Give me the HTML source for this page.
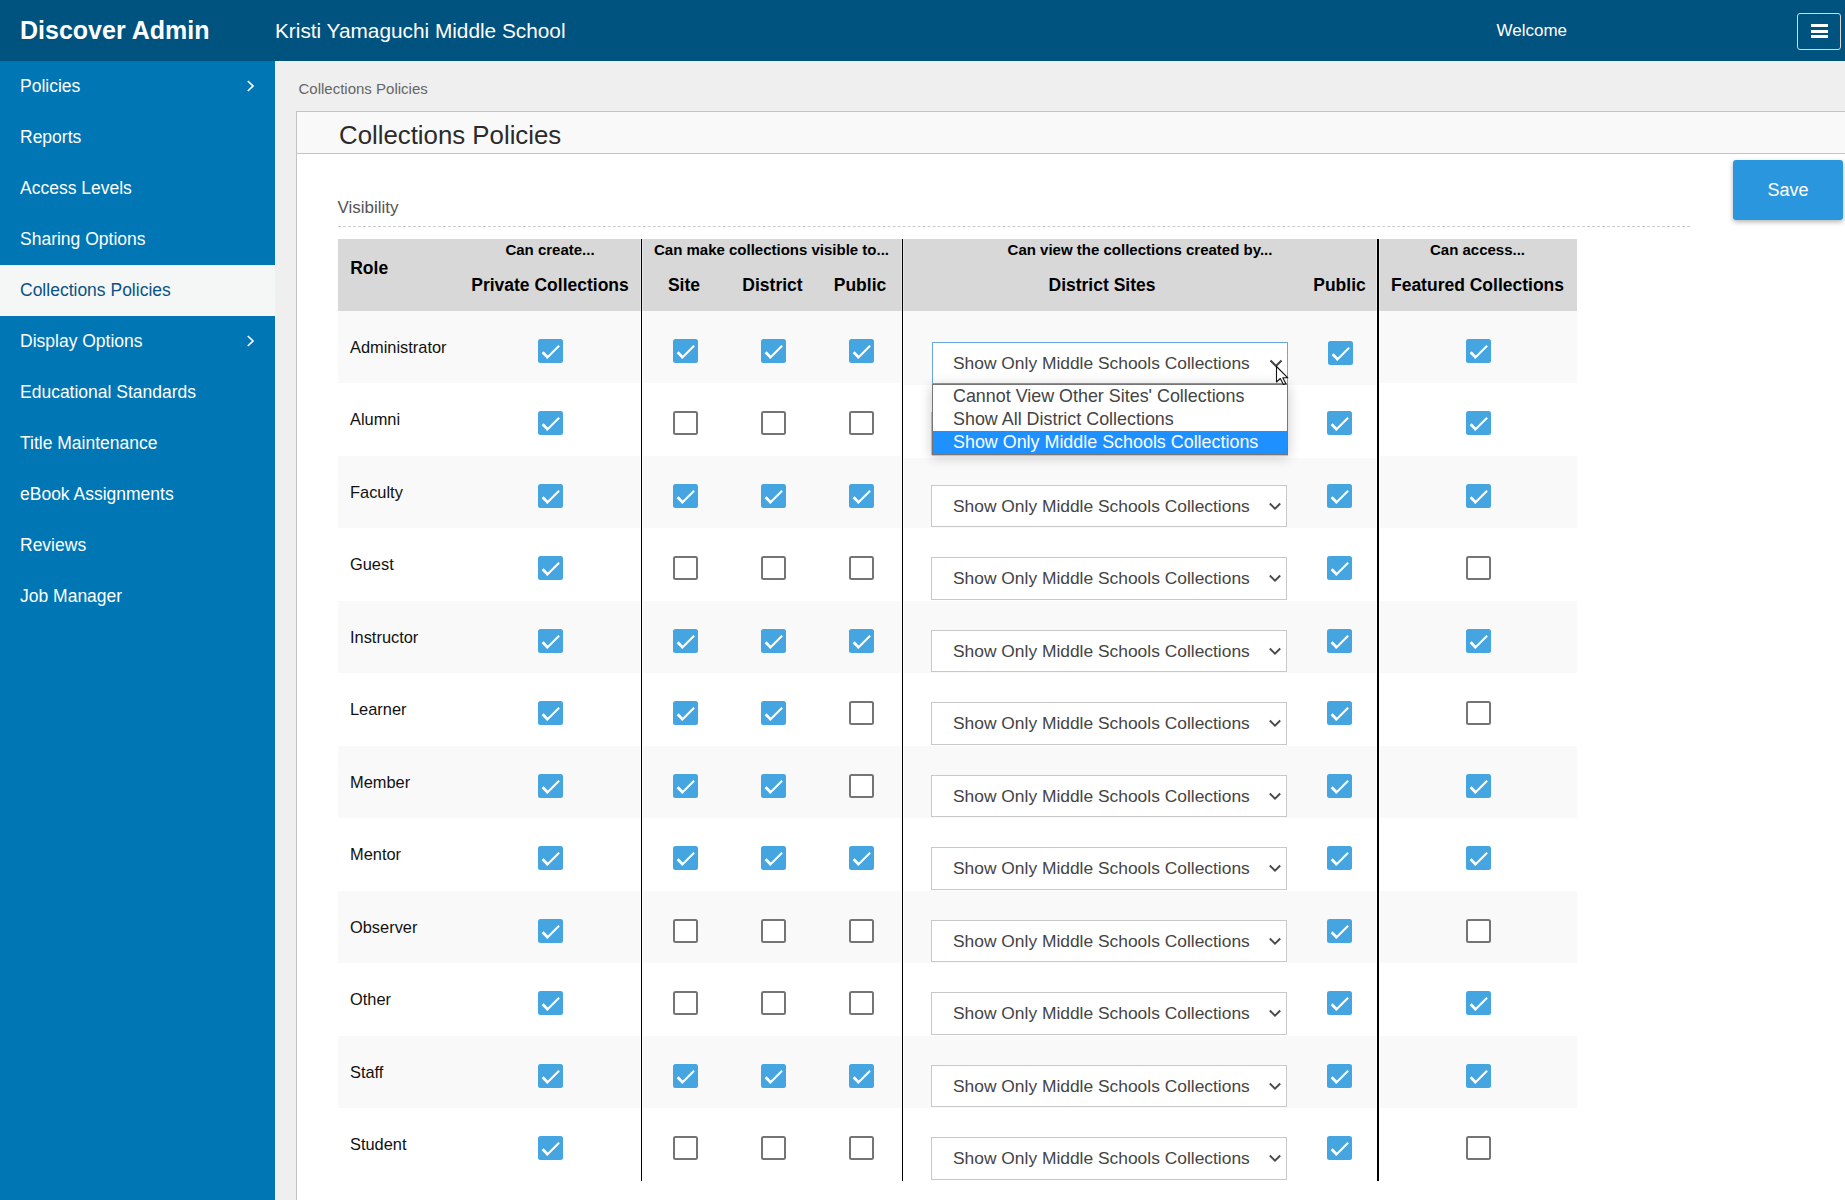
<!DOCTYPE html>
<html><head><meta charset="utf-8"><style>
*{box-sizing:border-box}
html,body{margin:0;padding:0}
body{width:1845px;height:1200px;overflow:hidden;position:relative;background:#efefef;font-family:"Liberation Sans",sans-serif}
.abs{position:absolute}
#hdr{position:absolute;left:0;top:0;width:1845px;height:61px;background:#00527f}
#brand{position:absolute;left:20px;top:17.8px;font-size:25px;line-height:25px;font-weight:700;color:#fff;white-space:nowrap}
#school{position:absolute;left:275px;top:21.2px;font-size:20.8px;line-height:20.8px;color:#fff;white-space:nowrap}
#welcome{position:absolute;left:1496.5px;top:22.3px;font-size:17px;line-height:17px;color:#fff;white-space:nowrap}
#burger{position:absolute;left:1797px;top:13px;width:44px;height:37px;border:1px solid #d9d9d9;border-radius:3px}
#side{position:absolute;left:0;top:61px;width:275px;height:1139px;background:#0076b4}
.si{position:absolute;left:0;width:275px;height:51px;line-height:51px;padding-left:20px;font-size:17.5px;color:#fff;white-space:nowrap}
.si.active{background:#f5f7f7;color:#0a5286}
.chev{position:absolute;left:245px;top:18.3px}
#crumb{position:absolute;left:298.5px;top:80.9px;font-size:15px;line-height:15px;color:#666;white-space:nowrap}
#panel{position:absolute;left:296px;top:111px;width:1549px;height:1089px;background:#fff;border-left:1px solid #c3c3c3;border-top:1px solid #c3c3c3}
#phead{position:absolute;left:297px;top:112px;width:1548px;height:42px;background:#f9f9f9;border-bottom:1px solid #c3c3c3}
#ptitle{position:absolute;left:339px;top:122.6px;font-size:25.8px;line-height:25.8px;color:#2b2b2b;white-space:nowrap}
#save{position:absolute;left:1733px;top:160px;width:110px;height:60px;background:#2a96dd;border-radius:3px;box-shadow:0 2px 5px rgba(0,0,0,.3);color:#fff;font-size:18px;line-height:60px;text-align:center}
#vis{position:absolute;left:337.5px;top:199.3px;font-size:17px;line-height:17px;color:#555;white-space:nowrap}
#dash{position:absolute;left:338px;top:226px;width:1352px;height:1px;border-top:1px dashed #cccccc}
#thead{position:absolute;left:338px;top:239px;width:1239px;height:72px;background:#d8d8d8}
.th{position:absolute;font-weight:700;color:#000;white-space:nowrap}
.g{font-size:15px;line-height:15px;top:241.6px;text-align:center}
.c{font-size:17.5px;line-height:17.5px;top:277.2px;text-align:center}
.vline{position:absolute;top:239px;width:3px;height:942px;background:#fff;border-left:1px solid #fff;border-right:1px solid #fff}
.vline:after{content:"";position:absolute;left:0;top:0;width:1px;height:100%;background:#000}
.vline .hd{position:absolute;left:-1px;top:0;width:3px;height:72px;background:#e6e6e6}
.vline.v2{width:4px}
.vline.v2:after{width:2px}
.vline.v2 .hd{width:4px}
.rowbg{position:absolute;left:338px;width:1239px;background:#f9f9f9}
.rname{position:absolute;left:350px;font-size:16.4px;line-height:16.4px;color:#111;white-space:nowrap}
.cb{position:absolute;width:25px;height:24px;border-radius:2.5px}
.cb.on{background:#45a5e1}
.cb.on svg{position:absolute;left:0;top:0}
.cb.off{background:#fff;border:2px solid #747474}
.sel{position:absolute;left:931px;width:356px;height:42px;background:#fff;border:1px solid #c8c8c8}
.sel span{position:absolute;left:21px;top:12px;font-size:17.4px;line-height:17.5px;color:#444;white-space:nowrap}
.sel .arr{position:absolute;left:336px;top:15.8px}
#osel{position:absolute;left:932px;top:342px;width:356px;height:42px;background:#fff;border:1px solid #6aa7e0}
#osel span{position:absolute;left:20px;top:12px;font-size:17.4px;line-height:17.5px;color:#444;white-space:nowrap}
#popup{position:absolute;left:932px;top:384px;width:356px;height:71px;background:#fff;border:1px solid #767676;box-shadow:0 1px 0 #c4c4c4,0 2px 12px rgba(0,0,0,.22)}
.opt{position:absolute;left:0;width:354px;height:23px;padding-left:20px;font-size:17.9px;line-height:23px;color:#444;white-space:nowrap}
.opt.hi{background:#1e90ff;color:#fff}
</style></head><body>
<div id="hdr"></div>
<div id="brand">Discover Admin</div>
<div id="school">Kristi Yamaguchi Middle School</div>
<div id="welcome">Welcome</div>
<div id="burger"><svg width="44" height="37" viewBox="0 0 44 37" style="position:absolute;left:-1px;top:-1px"><rect x="14" y="11" width="17" height="3" fill="#fff"/><rect x="14" y="17" width="17" height="3" fill="#fff"/><rect x="14" y="22" width="17" height="3" fill="#fff"/></svg></div>
<div id="side"></div>
<div class="si" style="top:61px">Policies<svg class="chev" width="10" height="14" viewBox="0 0 10 14"><path d="M2.8 2 L8 7 L2.8 12" fill="none" stroke="#fff" stroke-width="1.7"/></svg></div><div class="si" style="top:112px">Reports</div><div class="si" style="top:163px">Access Levels</div><div class="si" style="top:214px">Sharing Options</div><div class="si active" style="top:265px">Collections Policies</div><div class="si" style="top:316px">Display Options<svg class="chev" width="10" height="14" viewBox="0 0 10 14"><path d="M2.8 2 L8 7 L2.8 12" fill="none" stroke="#fff" stroke-width="1.7"/></svg></div><div class="si" style="top:367px">Educational Standards</div><div class="si" style="top:418px">Title Maintenance</div><div class="si" style="top:469px">eBook Assignments</div><div class="si" style="top:520px">Reviews</div><div class="si" style="top:571px">Job Manager</div>
<div id="crumb">Collections Policies</div>
<div id="panel"></div>
<div id="phead"></div>
<div id="ptitle">Collections Policies</div>
<div id="save">Save</div>
<div id="vis">Visibility</div>
<div id="dash"></div>
<div id="thead"></div>
<div class="th" style="left:350.2px;top:260.2px;font-size:17.5px;line-height:17.5px">Role</div>
<div class="th g" style="left:459px;width:182px">Can create...</div>
<div class="th g" style="left:641px;width:261px">Can make collections visible to...</div>
<div class="th g" style="left:902px;width:476px">Can view the collections created by...</div>
<div class="th g" style="left:1378px;width:199px">Can access...</div>
<div class="th c" style="left:459px;width:182px">Private Collections</div>
<div class="th c" style="left:641px;width:86px">Site</div>
<div class="th c" style="left:727px;width:91px">District</div>
<div class="th c" style="left:818px;width:84px">Public</div>
<div class="th c" style="left:902px;width:400px">District Sites</div>
<div class="th c" style="left:1301px;width:77px">Public</div>
<div class="th c" style="left:1378px;width:199px">Featured Collections</div>
<div class="rowbg" style="top:311px;height:72px;width:564px"></div><div class="rowbg" style="left:902px;top:311px;height:74px;width:476px"></div><div class="rowbg" style="left:1378px;top:311px;height:72px;width:199px"></div><div class="rname" style="top:339px">Administrator</div><div class="cb on" style="left:538px;top:339px"><svg width="25" height="25" viewBox="0 0 25 25"><path d="M4.6 13.3 L9.8 18.5" fill="none" stroke="#fff" stroke-width="2.7"/><path d="M8.6 19.3 L21.1 6.8" fill="none" stroke="#fff" stroke-width="2.1"/></svg></div><div class="cb on" style="left:673px;top:339px"><svg width="25" height="25" viewBox="0 0 25 25"><path d="M4.6 13.3 L9.8 18.5" fill="none" stroke="#fff" stroke-width="2.7"/><path d="M8.6 19.3 L21.1 6.8" fill="none" stroke="#fff" stroke-width="2.1"/></svg></div><div class="cb on" style="left:761px;top:339px"><svg width="25" height="25" viewBox="0 0 25 25"><path d="M4.6 13.3 L9.8 18.5" fill="none" stroke="#fff" stroke-width="2.7"/><path d="M8.6 19.3 L21.1 6.8" fill="none" stroke="#fff" stroke-width="2.1"/></svg></div><div class="cb on" style="left:849px;top:339px"><svg width="25" height="25" viewBox="0 0 25 25"><path d="M4.6 13.3 L9.8 18.5" fill="none" stroke="#fff" stroke-width="2.7"/><path d="M8.6 19.3 L21.1 6.8" fill="none" stroke="#fff" stroke-width="2.1"/></svg></div><div class="cb on" style="left:1328px;top:341px"><svg width="25" height="25" viewBox="0 0 25 25"><path d="M4.6 13.3 L9.8 18.5" fill="none" stroke="#fff" stroke-width="2.7"/><path d="M8.6 19.3 L21.1 6.8" fill="none" stroke="#fff" stroke-width="2.1"/></svg></div><div class="cb on" style="left:1466px;top:339px"><svg width="25" height="25" viewBox="0 0 25 25"><path d="M4.6 13.3 L9.8 18.5" fill="none" stroke="#fff" stroke-width="2.7"/><path d="M8.6 19.3 L21.1 6.8" fill="none" stroke="#fff" stroke-width="2.1"/></svg></div><div class="rname" style="top:411px">Alumni</div><div class="cb on" style="left:538px;top:411px"><svg width="25" height="25" viewBox="0 0 25 25"><path d="M4.6 13.3 L9.8 18.5" fill="none" stroke="#fff" stroke-width="2.7"/><path d="M8.6 19.3 L21.1 6.8" fill="none" stroke="#fff" stroke-width="2.1"/></svg></div><div class="cb off" style="left:673px;top:411px"></div><div class="cb off" style="left:761px;top:411px"></div><div class="cb off" style="left:849px;top:411px"></div><div class="cb on" style="left:1327px;top:411px"><svg width="25" height="25" viewBox="0 0 25 25"><path d="M4.6 13.3 L9.8 18.5" fill="none" stroke="#fff" stroke-width="2.7"/><path d="M8.6 19.3 L21.1 6.8" fill="none" stroke="#fff" stroke-width="2.1"/></svg></div><div class="cb on" style="left:1466px;top:411px"><svg width="25" height="25" viewBox="0 0 25 25"><path d="M4.6 13.3 L9.8 18.5" fill="none" stroke="#fff" stroke-width="2.7"/><path d="M8.6 19.3 L21.1 6.8" fill="none" stroke="#fff" stroke-width="2.1"/></svg></div><div class="sel" style="top:412px;height:43px"><span>Show Only Middle Schools Collections</span><svg class="arr" width="14" height="9" viewBox="0 0 14 9"><path d="M1.8 1.5 L7 6.7 L12.2 1.5" fill="none" stroke="#4a4a4a" stroke-width="1.9"/></svg></div><div class="rowbg" style="top:456px;height:72px;width:564px"></div><div class="rowbg" style="left:902px;top:458px;height:70px;width:476px"></div><div class="rowbg" style="left:1378px;top:456px;height:72px;width:199px"></div><div class="rname" style="top:484px">Faculty</div><div class="cb on" style="left:538px;top:484px"><svg width="25" height="25" viewBox="0 0 25 25"><path d="M4.6 13.3 L9.8 18.5" fill="none" stroke="#fff" stroke-width="2.7"/><path d="M8.6 19.3 L21.1 6.8" fill="none" stroke="#fff" stroke-width="2.1"/></svg></div><div class="cb on" style="left:673px;top:484px"><svg width="25" height="25" viewBox="0 0 25 25"><path d="M4.6 13.3 L9.8 18.5" fill="none" stroke="#fff" stroke-width="2.7"/><path d="M8.6 19.3 L21.1 6.8" fill="none" stroke="#fff" stroke-width="2.1"/></svg></div><div class="cb on" style="left:761px;top:484px"><svg width="25" height="25" viewBox="0 0 25 25"><path d="M4.6 13.3 L9.8 18.5" fill="none" stroke="#fff" stroke-width="2.7"/><path d="M8.6 19.3 L21.1 6.8" fill="none" stroke="#fff" stroke-width="2.1"/></svg></div><div class="cb on" style="left:849px;top:484px"><svg width="25" height="25" viewBox="0 0 25 25"><path d="M4.6 13.3 L9.8 18.5" fill="none" stroke="#fff" stroke-width="2.7"/><path d="M8.6 19.3 L21.1 6.8" fill="none" stroke="#fff" stroke-width="2.1"/></svg></div><div class="cb on" style="left:1327px;top:484px"><svg width="25" height="25" viewBox="0 0 25 25"><path d="M4.6 13.3 L9.8 18.5" fill="none" stroke="#fff" stroke-width="2.7"/><path d="M8.6 19.3 L21.1 6.8" fill="none" stroke="#fff" stroke-width="2.1"/></svg></div><div class="cb on" style="left:1466px;top:484px"><svg width="25" height="25" viewBox="0 0 25 25"><path d="M4.6 13.3 L9.8 18.5" fill="none" stroke="#fff" stroke-width="2.7"/><path d="M8.6 19.3 L21.1 6.8" fill="none" stroke="#fff" stroke-width="2.1"/></svg></div><div class="sel" style="top:485px;height:42px"><span>Show Only Middle Schools Collections</span><svg class="arr" width="14" height="9" viewBox="0 0 14 9"><path d="M1.8 1.5 L7 6.7 L12.2 1.5" fill="none" stroke="#4a4a4a" stroke-width="1.9"/></svg></div><div class="rname" style="top:556px">Guest</div><div class="cb on" style="left:538px;top:556px"><svg width="25" height="25" viewBox="0 0 25 25"><path d="M4.6 13.3 L9.8 18.5" fill="none" stroke="#fff" stroke-width="2.7"/><path d="M8.6 19.3 L21.1 6.8" fill="none" stroke="#fff" stroke-width="2.1"/></svg></div><div class="cb off" style="left:673px;top:556px"></div><div class="cb off" style="left:761px;top:556px"></div><div class="cb off" style="left:849px;top:556px"></div><div class="cb on" style="left:1327px;top:556px"><svg width="25" height="25" viewBox="0 0 25 25"><path d="M4.6 13.3 L9.8 18.5" fill="none" stroke="#fff" stroke-width="2.7"/><path d="M8.6 19.3 L21.1 6.8" fill="none" stroke="#fff" stroke-width="2.1"/></svg></div><div class="cb off" style="left:1466px;top:556px"></div><div class="sel" style="top:557px;height:43px"><span>Show Only Middle Schools Collections</span><svg class="arr" width="14" height="9" viewBox="0 0 14 9"><path d="M1.8 1.5 L7 6.7 L12.2 1.5" fill="none" stroke="#4a4a4a" stroke-width="1.9"/></svg></div><div class="rowbg" style="top:601px;height:72px"></div><div class="rname" style="top:629px">Instructor</div><div class="cb on" style="left:538px;top:629px"><svg width="25" height="25" viewBox="0 0 25 25"><path d="M4.6 13.3 L9.8 18.5" fill="none" stroke="#fff" stroke-width="2.7"/><path d="M8.6 19.3 L21.1 6.8" fill="none" stroke="#fff" stroke-width="2.1"/></svg></div><div class="cb on" style="left:673px;top:629px"><svg width="25" height="25" viewBox="0 0 25 25"><path d="M4.6 13.3 L9.8 18.5" fill="none" stroke="#fff" stroke-width="2.7"/><path d="M8.6 19.3 L21.1 6.8" fill="none" stroke="#fff" stroke-width="2.1"/></svg></div><div class="cb on" style="left:761px;top:629px"><svg width="25" height="25" viewBox="0 0 25 25"><path d="M4.6 13.3 L9.8 18.5" fill="none" stroke="#fff" stroke-width="2.7"/><path d="M8.6 19.3 L21.1 6.8" fill="none" stroke="#fff" stroke-width="2.1"/></svg></div><div class="cb on" style="left:849px;top:629px"><svg width="25" height="25" viewBox="0 0 25 25"><path d="M4.6 13.3 L9.8 18.5" fill="none" stroke="#fff" stroke-width="2.7"/><path d="M8.6 19.3 L21.1 6.8" fill="none" stroke="#fff" stroke-width="2.1"/></svg></div><div class="cb on" style="left:1327px;top:629px"><svg width="25" height="25" viewBox="0 0 25 25"><path d="M4.6 13.3 L9.8 18.5" fill="none" stroke="#fff" stroke-width="2.7"/><path d="M8.6 19.3 L21.1 6.8" fill="none" stroke="#fff" stroke-width="2.1"/></svg></div><div class="cb on" style="left:1466px;top:629px"><svg width="25" height="25" viewBox="0 0 25 25"><path d="M4.6 13.3 L9.8 18.5" fill="none" stroke="#fff" stroke-width="2.7"/><path d="M8.6 19.3 L21.1 6.8" fill="none" stroke="#fff" stroke-width="2.1"/></svg></div><div class="sel" style="top:630px;height:42px"><span>Show Only Middle Schools Collections</span><svg class="arr" width="14" height="9" viewBox="0 0 14 9"><path d="M1.8 1.5 L7 6.7 L12.2 1.5" fill="none" stroke="#4a4a4a" stroke-width="1.9"/></svg></div><div class="rname" style="top:701px">Learner</div><div class="cb on" style="left:538px;top:701px"><svg width="25" height="25" viewBox="0 0 25 25"><path d="M4.6 13.3 L9.8 18.5" fill="none" stroke="#fff" stroke-width="2.7"/><path d="M8.6 19.3 L21.1 6.8" fill="none" stroke="#fff" stroke-width="2.1"/></svg></div><div class="cb on" style="left:673px;top:701px"><svg width="25" height="25" viewBox="0 0 25 25"><path d="M4.6 13.3 L9.8 18.5" fill="none" stroke="#fff" stroke-width="2.7"/><path d="M8.6 19.3 L21.1 6.8" fill="none" stroke="#fff" stroke-width="2.1"/></svg></div><div class="cb on" style="left:761px;top:701px"><svg width="25" height="25" viewBox="0 0 25 25"><path d="M4.6 13.3 L9.8 18.5" fill="none" stroke="#fff" stroke-width="2.7"/><path d="M8.6 19.3 L21.1 6.8" fill="none" stroke="#fff" stroke-width="2.1"/></svg></div><div class="cb off" style="left:849px;top:701px"></div><div class="cb on" style="left:1327px;top:701px"><svg width="25" height="25" viewBox="0 0 25 25"><path d="M4.6 13.3 L9.8 18.5" fill="none" stroke="#fff" stroke-width="2.7"/><path d="M8.6 19.3 L21.1 6.8" fill="none" stroke="#fff" stroke-width="2.1"/></svg></div><div class="cb off" style="left:1466px;top:701px"></div><div class="sel" style="top:702px;height:43px"><span>Show Only Middle Schools Collections</span><svg class="arr" width="14" height="9" viewBox="0 0 14 9"><path d="M1.8 1.5 L7 6.7 L12.2 1.5" fill="none" stroke="#4a4a4a" stroke-width="1.9"/></svg></div><div class="rowbg" style="top:746px;height:72px"></div><div class="rname" style="top:774px">Member</div><div class="cb on" style="left:538px;top:774px"><svg width="25" height="25" viewBox="0 0 25 25"><path d="M4.6 13.3 L9.8 18.5" fill="none" stroke="#fff" stroke-width="2.7"/><path d="M8.6 19.3 L21.1 6.8" fill="none" stroke="#fff" stroke-width="2.1"/></svg></div><div class="cb on" style="left:673px;top:774px"><svg width="25" height="25" viewBox="0 0 25 25"><path d="M4.6 13.3 L9.8 18.5" fill="none" stroke="#fff" stroke-width="2.7"/><path d="M8.6 19.3 L21.1 6.8" fill="none" stroke="#fff" stroke-width="2.1"/></svg></div><div class="cb on" style="left:761px;top:774px"><svg width="25" height="25" viewBox="0 0 25 25"><path d="M4.6 13.3 L9.8 18.5" fill="none" stroke="#fff" stroke-width="2.7"/><path d="M8.6 19.3 L21.1 6.8" fill="none" stroke="#fff" stroke-width="2.1"/></svg></div><div class="cb off" style="left:849px;top:774px"></div><div class="cb on" style="left:1327px;top:774px"><svg width="25" height="25" viewBox="0 0 25 25"><path d="M4.6 13.3 L9.8 18.5" fill="none" stroke="#fff" stroke-width="2.7"/><path d="M8.6 19.3 L21.1 6.8" fill="none" stroke="#fff" stroke-width="2.1"/></svg></div><div class="cb on" style="left:1466px;top:774px"><svg width="25" height="25" viewBox="0 0 25 25"><path d="M4.6 13.3 L9.8 18.5" fill="none" stroke="#fff" stroke-width="2.7"/><path d="M8.6 19.3 L21.1 6.8" fill="none" stroke="#fff" stroke-width="2.1"/></svg></div><div class="sel" style="top:775px;height:42px"><span>Show Only Middle Schools Collections</span><svg class="arr" width="14" height="9" viewBox="0 0 14 9"><path d="M1.8 1.5 L7 6.7 L12.2 1.5" fill="none" stroke="#4a4a4a" stroke-width="1.9"/></svg></div><div class="rname" style="top:846px">Mentor</div><div class="cb on" style="left:538px;top:846px"><svg width="25" height="25" viewBox="0 0 25 25"><path d="M4.6 13.3 L9.8 18.5" fill="none" stroke="#fff" stroke-width="2.7"/><path d="M8.6 19.3 L21.1 6.8" fill="none" stroke="#fff" stroke-width="2.1"/></svg></div><div class="cb on" style="left:673px;top:846px"><svg width="25" height="25" viewBox="0 0 25 25"><path d="M4.6 13.3 L9.8 18.5" fill="none" stroke="#fff" stroke-width="2.7"/><path d="M8.6 19.3 L21.1 6.8" fill="none" stroke="#fff" stroke-width="2.1"/></svg></div><div class="cb on" style="left:761px;top:846px"><svg width="25" height="25" viewBox="0 0 25 25"><path d="M4.6 13.3 L9.8 18.5" fill="none" stroke="#fff" stroke-width="2.7"/><path d="M8.6 19.3 L21.1 6.8" fill="none" stroke="#fff" stroke-width="2.1"/></svg></div><div class="cb on" style="left:849px;top:846px"><svg width="25" height="25" viewBox="0 0 25 25"><path d="M4.6 13.3 L9.8 18.5" fill="none" stroke="#fff" stroke-width="2.7"/><path d="M8.6 19.3 L21.1 6.8" fill="none" stroke="#fff" stroke-width="2.1"/></svg></div><div class="cb on" style="left:1327px;top:846px"><svg width="25" height="25" viewBox="0 0 25 25"><path d="M4.6 13.3 L9.8 18.5" fill="none" stroke="#fff" stroke-width="2.7"/><path d="M8.6 19.3 L21.1 6.8" fill="none" stroke="#fff" stroke-width="2.1"/></svg></div><div class="cb on" style="left:1466px;top:846px"><svg width="25" height="25" viewBox="0 0 25 25"><path d="M4.6 13.3 L9.8 18.5" fill="none" stroke="#fff" stroke-width="2.7"/><path d="M8.6 19.3 L21.1 6.8" fill="none" stroke="#fff" stroke-width="2.1"/></svg></div><div class="sel" style="top:847px;height:43px"><span>Show Only Middle Schools Collections</span><svg class="arr" width="14" height="9" viewBox="0 0 14 9"><path d="M1.8 1.5 L7 6.7 L12.2 1.5" fill="none" stroke="#4a4a4a" stroke-width="1.9"/></svg></div><div class="rowbg" style="top:891px;height:72px"></div><div class="rname" style="top:919px">Observer</div><div class="cb on" style="left:538px;top:919px"><svg width="25" height="25" viewBox="0 0 25 25"><path d="M4.6 13.3 L9.8 18.5" fill="none" stroke="#fff" stroke-width="2.7"/><path d="M8.6 19.3 L21.1 6.8" fill="none" stroke="#fff" stroke-width="2.1"/></svg></div><div class="cb off" style="left:673px;top:919px"></div><div class="cb off" style="left:761px;top:919px"></div><div class="cb off" style="left:849px;top:919px"></div><div class="cb on" style="left:1327px;top:919px"><svg width="25" height="25" viewBox="0 0 25 25"><path d="M4.6 13.3 L9.8 18.5" fill="none" stroke="#fff" stroke-width="2.7"/><path d="M8.6 19.3 L21.1 6.8" fill="none" stroke="#fff" stroke-width="2.1"/></svg></div><div class="cb off" style="left:1466px;top:919px"></div><div class="sel" style="top:920px;height:42px"><span>Show Only Middle Schools Collections</span><svg class="arr" width="14" height="9" viewBox="0 0 14 9"><path d="M1.8 1.5 L7 6.7 L12.2 1.5" fill="none" stroke="#4a4a4a" stroke-width="1.9"/></svg></div><div class="rname" style="top:991px">Other</div><div class="cb on" style="left:538px;top:991px"><svg width="25" height="25" viewBox="0 0 25 25"><path d="M4.6 13.3 L9.8 18.5" fill="none" stroke="#fff" stroke-width="2.7"/><path d="M8.6 19.3 L21.1 6.8" fill="none" stroke="#fff" stroke-width="2.1"/></svg></div><div class="cb off" style="left:673px;top:991px"></div><div class="cb off" style="left:761px;top:991px"></div><div class="cb off" style="left:849px;top:991px"></div><div class="cb on" style="left:1327px;top:991px"><svg width="25" height="25" viewBox="0 0 25 25"><path d="M4.6 13.3 L9.8 18.5" fill="none" stroke="#fff" stroke-width="2.7"/><path d="M8.6 19.3 L21.1 6.8" fill="none" stroke="#fff" stroke-width="2.1"/></svg></div><div class="cb on" style="left:1466px;top:991px"><svg width="25" height="25" viewBox="0 0 25 25"><path d="M4.6 13.3 L9.8 18.5" fill="none" stroke="#fff" stroke-width="2.7"/><path d="M8.6 19.3 L21.1 6.8" fill="none" stroke="#fff" stroke-width="2.1"/></svg></div><div class="sel" style="top:992px;height:43px"><span>Show Only Middle Schools Collections</span><svg class="arr" width="14" height="9" viewBox="0 0 14 9"><path d="M1.8 1.5 L7 6.7 L12.2 1.5" fill="none" stroke="#4a4a4a" stroke-width="1.9"/></svg></div><div class="rowbg" style="top:1036px;height:72px"></div><div class="rname" style="top:1064px">Staff</div><div class="cb on" style="left:538px;top:1064px"><svg width="25" height="25" viewBox="0 0 25 25"><path d="M4.6 13.3 L9.8 18.5" fill="none" stroke="#fff" stroke-width="2.7"/><path d="M8.6 19.3 L21.1 6.8" fill="none" stroke="#fff" stroke-width="2.1"/></svg></div><div class="cb on" style="left:673px;top:1064px"><svg width="25" height="25" viewBox="0 0 25 25"><path d="M4.6 13.3 L9.8 18.5" fill="none" stroke="#fff" stroke-width="2.7"/><path d="M8.6 19.3 L21.1 6.8" fill="none" stroke="#fff" stroke-width="2.1"/></svg></div><div class="cb on" style="left:761px;top:1064px"><svg width="25" height="25" viewBox="0 0 25 25"><path d="M4.6 13.3 L9.8 18.5" fill="none" stroke="#fff" stroke-width="2.7"/><path d="M8.6 19.3 L21.1 6.8" fill="none" stroke="#fff" stroke-width="2.1"/></svg></div><div class="cb on" style="left:849px;top:1064px"><svg width="25" height="25" viewBox="0 0 25 25"><path d="M4.6 13.3 L9.8 18.5" fill="none" stroke="#fff" stroke-width="2.7"/><path d="M8.6 19.3 L21.1 6.8" fill="none" stroke="#fff" stroke-width="2.1"/></svg></div><div class="cb on" style="left:1327px;top:1064px"><svg width="25" height="25" viewBox="0 0 25 25"><path d="M4.6 13.3 L9.8 18.5" fill="none" stroke="#fff" stroke-width="2.7"/><path d="M8.6 19.3 L21.1 6.8" fill="none" stroke="#fff" stroke-width="2.1"/></svg></div><div class="cb on" style="left:1466px;top:1064px"><svg width="25" height="25" viewBox="0 0 25 25"><path d="M4.6 13.3 L9.8 18.5" fill="none" stroke="#fff" stroke-width="2.7"/><path d="M8.6 19.3 L21.1 6.8" fill="none" stroke="#fff" stroke-width="2.1"/></svg></div><div class="sel" style="top:1065px;height:42px"><span>Show Only Middle Schools Collections</span><svg class="arr" width="14" height="9" viewBox="0 0 14 9"><path d="M1.8 1.5 L7 6.7 L12.2 1.5" fill="none" stroke="#4a4a4a" stroke-width="1.9"/></svg></div><div class="rname" style="top:1136px">Student</div><div class="cb on" style="left:538px;top:1136px"><svg width="25" height="25" viewBox="0 0 25 25"><path d="M4.6 13.3 L9.8 18.5" fill="none" stroke="#fff" stroke-width="2.7"/><path d="M8.6 19.3 L21.1 6.8" fill="none" stroke="#fff" stroke-width="2.1"/></svg></div><div class="cb off" style="left:673px;top:1136px"></div><div class="cb off" style="left:761px;top:1136px"></div><div class="cb off" style="left:849px;top:1136px"></div><div class="cb on" style="left:1327px;top:1136px"><svg width="25" height="25" viewBox="0 0 25 25"><path d="M4.6 13.3 L9.8 18.5" fill="none" stroke="#fff" stroke-width="2.7"/><path d="M8.6 19.3 L21.1 6.8" fill="none" stroke="#fff" stroke-width="2.1"/></svg></div><div class="cb off" style="left:1466px;top:1136px"></div><div class="sel" style="top:1137px;height:43px"><span>Show Only Middle Schools Collections</span><svg class="arr" width="14" height="9" viewBox="0 0 14 9"><path d="M1.8 1.5 L7 6.7 L12.2 1.5" fill="none" stroke="#4a4a4a" stroke-width="1.9"/></svg></div>
<div class="vline" style="left:640px"><div class="hd"></div></div>
<div class="vline" style="left:901px"><div class="hd"></div></div>
<div class="vline v2" style="left:1376px"><div class="hd"></div></div>
<div id="osel"><span>Show Only Middle Schools Collections</span><svg class="arr" style="position:absolute;left:336px;top:16px" width="14" height="9" viewBox="0 0 14 9"><path d="M1.5 1.5 L7 7 L12.5 1.5" fill="none" stroke="#444" stroke-width="2"/></svg></div>
<div id="popup">
<div class="opt" style="top:0">Cannot View Other Sites' Collections</div>
<div class="opt" style="top:23px">Show All District Collections</div>
<div class="opt hi" style="top:46px">Show Only Middle Schools Collections</div>
</div>
<svg style="position:absolute;left:1275px;top:365px" width="15" height="22" viewBox="0 0 15 22"><path d="M1.5 1.5 L1.5 17 L5.3 13.5 L8.5 19.5 L10.8 18.5 L7.8 12.8 L12.8 12.8 Z" fill="#fff" stroke="#111" stroke-width="1.1" stroke-linejoin="round"/></svg>
</body></html>
